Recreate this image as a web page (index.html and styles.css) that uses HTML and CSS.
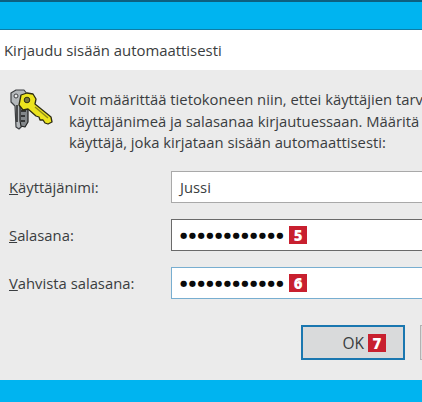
FILE: index.html
```html
<!DOCTYPE html>
<html lang="en">
<head>
    <meta charset="UTF-8">
    <meta name="viewport" content="width=device-width, initial-scale=1.0">
    <title>Kirjaudu sisään automaattisesti</title>
    <link rel="stylesheet" href="styles.css">
</head>
<body>
    <div class="top-band"></div>
    <div class="dialog-title">Kirjaudu sisään automaattisesti</div>
    <div class="dialog-body">
        <div class="intro">
            <svg class="keys-icon" width="60" height="60" viewBox="0 80 60 60">
                <!-- grey key at the back -->
                <path d="M11 93l5-3h8l4 5v8l-3 3v16l-3 4-3 3-3-2-1-21-4-4z" fill="#b4b8bb" stroke="#3c3f42" stroke-width="1.2" stroke-linejoin="round"/>
                <circle cx="16" cy="96" r="2" fill="#ebebeb" stroke="#3c3f42"/>
                <!-- dark key in the middle -->
                <path d="M20 106l8-1v17l-3 5-4-1-1-5z" fill="#83878a" stroke="#222" stroke-width="1.2" stroke-linejoin="round"/>
                <path d="M17 105v17M21 111h5M21 116h4M21 121h4" stroke="#1c1c1c" stroke-width="1.4" fill="none"/>
                <!-- yellow key in front -->
                <path d="M21 95l6-2 6 1 3 5-1 5 16 13 1 5-4 2-3-1-2-3-3 0-1-3-3-1-8-7-5 1-4-5z" fill="#ece41e" stroke="#2e2c12" stroke-width="1.3" stroke-linejoin="round"/>
                <path d="M35 107l13 11" stroke="#8f8a1c" stroke-width="1.4" fill="none"/>
                <circle cx="27" cy="100" r="2.8" fill="#77763e" stroke="#2e2c12"/>
            </svg>
            <p class="intro-text">Voit määrittää tietokoneen niin, ettei käyttäjien tarvitse<br>käyttäjänimeä ja salasanaa kirjautuessaan. Määritä<br>käyttäjä, joka kirjataan sisään automaattisesti:</p>
        </div>
        <div class="field-row">
            <label class="field-label"><u>K</u>äyttäjänimi:</label>
            <div class="field">Jussi</div>
        </div>
        <div class="field-row">
            <label class="field-label"><u>S</u>alasana:</label>
            <div class="field field-hover"><span class="dots">●●●●●●●●●●●●</span><span class="step">5</span></div>
        </div>
        <div class="field-row">
            <label class="field-label"><u>V</u>ahvista salasana:</label>
            <div class="field field-focus"><span class="dots">●●●●●●●●●●●●</span><span class="step">6</span></div>
        </div>
        <div class="buttons">
            <button class="btn btn-ok">OK<span class="step">7</span></button>
            <button class="btn"></button>
        </div>
    </div>
    <div class="bottom-band"></div>
</body>
</html>
```

FILE: styles.css
```css
html, body {
    margin: 0;
    height: 402px;
    overflow: hidden;
}
body {
    font-family: "Open Sans", "Noto Sans", sans-serif;
    font-size: 14.8px;
    color: #3a3d40;
    background-color: #ebebeb;
}
.top-band {
    height: 27px;
    background: #00b4f0;
    border-top: 2px solid #0d5f80;
    border-bottom: 1px solid #0e7da6;
}
.dialog-title {
    height: 40px;
    line-height: 40px;
    padding-left: 4px;
    background: #fff;
    font-size: 14.9px;
}
.dialog-body {
    height: 310px;
    box-sizing: border-box;
    padding: 16px 0 0 9px;
}
.intro {
    display: flex;
    height: 85px;
}
.keys-icon {
    margin: -6px 0 0 -9px;
    flex: none;
}
.intro-text {
    margin: 3px 0 0 9px;
    line-height: 21.5px;
    white-space: nowrap;
}
.field-row {
    display: flex;
    align-items: center;
    height: 32px;
    margin-bottom: 16px;
}
.field-label {
    width: 162px;
    flex: none;
}
.field {
    width: 300px;
    height: 32px;
    flex: none;
    box-sizing: border-box;
    display: flex;
    align-items: center;
    padding-left: 8px;
    background: #fff;
    border: 1px solid #a9a9a9;
}
.field-hover {
    border-color: #6a6a6a;
}
.field-focus {
    border-color: #78aed0;
}
.dots {
    font-family: "DejaVu Sans", sans-serif;
    font-size: 8.4px;
    letter-spacing: 1.45px;
    color: #0a0a0a;
}
.step {
    display: inline-block;
    width: 18px;
    height: 18px;
    margin-left: 4px;
    background: #c8202f;
    color: #fff;
    font-size: 15px;
    font-weight: 800;
    line-height: 18px;
    text-align: center;
}
.buttons {
    display: flex;
    gap: 15px;
    margin: 26px 0 0 292px;
}
.btn {
    width: 104px;
    height: 35px;
    flex: none;
    box-sizing: border-box;
    padding: 0;
    background: #dcdcdc;
    border: 1px solid #b2b2b2;
    font: inherit;
    color: #3a3d40;
}
.btn-ok {
    border: 2px solid #1a77b0;
    display: flex;
    align-items: center;
    justify-content: flex-end;
    padding-right: 17px;
    background: #d9dadb;
    font-size: 15.5px;
}
.btn-ok .step {
    margin-left: 4px;
}
.bottom-band {
    height: 22px;
    background: #00b4f0;
}
```
